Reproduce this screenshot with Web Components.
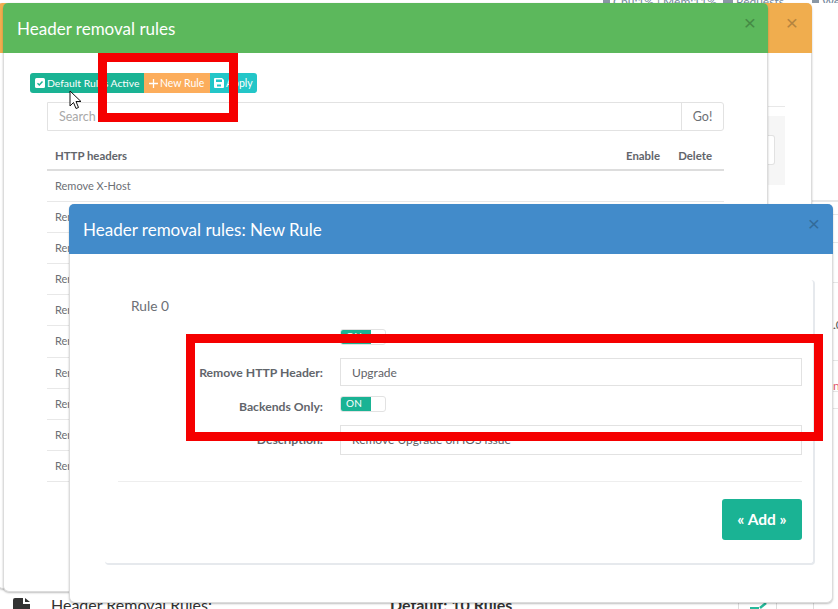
<!DOCTYPE html>
<html><head><meta charset="utf-8"><style>
html,body{margin:0;padding:0;background:#fff;overflow:hidden;height:609px;font-family:Lato,"Liberation Sans",sans-serif;color:#6c6f75}
</style></head><body>
<x-stage>
  <x-backdrop></x-backdrop>
  <x-modal slot="modals" tone="#f0ad4e" style="left:-3px;top:3px;width:815px;height:586px;--pr:14px" title-text="" close="#b5843f"><x-behind></x-behind></x-modal>
  <x-modal slot="modals" tone="#5cb85c" style="left:3px;top:3px;width:765px;height:589px;--pr:12px" title-text="Header removal rules" close="#458a45">
    <div style="padding:20px 43px 0 26px">
      <x-toolbar></x-toolbar>
      <x-rules></x-rules>
    </div>
  </x-modal>
  <x-modal slot="modals" tone="#428bca" style="left:69px;top:204px;width:764px;height:399px;--pr:13px" title-text="Header removal rules: New Rule" close="#336b9a">
    <x-rule-form></x-rule-form>
  </x-modal>
  <x-mark slot="modals" style="left:98px;top:53px;width:140px;height:69px"></x-mark>
  <x-mark slot="modals" style="left:186px;top:334px;width:637px;height:107px"></x-mark>
  <x-cursor slot="modals" style="left:69px;top:90px"></x-cursor>
</x-stage>
<script>
function def(name, css, html){
  customElements.define(name, class extends HTMLElement{
    connectedCallback(){
      if(this.shadowRoot) return;
      const r=this.attachShadow({mode:'open'});
      r.innerHTML='<style>'+css+'</style>'+(typeof html==='function'?html(this):html);
    }
  });
}
def('x-stage',':host{display:block;position:relative;width:838px;height:609px;overflow:hidden}','<slot></slot><slot name="modals"></slot>');
def('x-backdrop',`:host{display:flex;flex-direction:column;height:609px;color:#73879c;font-size:12px}
.top{display:grid;grid-template-columns:600px 13px 107px 16px 73px 13px 16px;height:3px;overflow:hidden;line-height:3px;flex:none;white-space:nowrap}
.top i{display:block;height:3px;background:#8a97a5;margin:0 3px}
.mid{flex:1;display:flex;flex-direction:column;align-items:flex-end}
.long{width:27px;height:2px;background:#e8e8e8;margin-top:197px;flex:none}
.strip{width:5px;font-size:12px;overflow:hidden;white-space:nowrap;line-height:14px}
.strip div{border-bottom:1px solid #e6e6e6;box-sizing:border-box}
.bottom{display:grid;grid-template-columns:51px 339px 348px 38px 37px 25px;height:11px;flex:none;overflow:hidden;color:#333;font-size:16px;line-height:20px}
.bottom>div{height:11px}
.doc{padding-left:13px}
.v{border-left:1px solid #ddd}
b{font-weight:700}
.t{margin-top:-3px}
.edit{padding-left:11px}`,
`<div class="top"><span></span><i></i><span>Cpu:1% | Mem:11%</span><i></i><span>Requests</span><i></i><span>We</span></div>
<div class="mid"><div class="long"></div><div class="strip">
<div style="height:13px"></div><div style="height:28px"></div><div style="height:40px"></div><div style="height:46px;padding-top:35px;color:#555">.0</div><div style="height:32px"></div><div style="height:31px;padding-top:18px;color:#e2566f">na</div><div style="height:17px"></div>
</div></div>
<div class="bottom"><div class="doc"><svg width="17" height="11" viewBox="0 0 17 11" style="display:block"><path d="M0 2q0-2 2-2h8v6h7v5H0z" fill="#333"/><path d="M12 0l5 4h-5z" fill="#333"/></svg></div><div class="t">Header Removal Rules:</div><div class="t"><b>Default: 10 Rules</b></div><div class="v edit"><svg width="20" height="11" viewBox="0 0 20 11" style="display:block"><path d="M0 10h9" stroke="#26b99a" stroke-width="2" fill="none"/><path d="M10 10l6-5" stroke="#26b99a" stroke-width="2.500" fill="none"/></svg></div><div class="v"></div><div class="v"></div></div>`);
def('x-behind',`:host{display:block;padding-left:770px;box-sizing:border-box}
.rule{width:17px;height:1px;background:#e8e8e8;margin-top:53px;margin-bottom:9px}
.well{width:17px;height:69px;background:#f6f6f6;padding-top:19px;box-sizing:border-box}
.in{width:7px;height:30px;background:#fff;border:1px solid #e2e2e2;border-left:0;border-radius:0 3px 3px 0;box-sizing:border-box}`,
'<div class="rule"></div><div class="well"><div class="in"></div></div>');
def('x-modal',`:host{display:flex;flex-direction:column;position:absolute;background:#fff;border:1px solid #dcdcdc;border-top:0;border-radius:6px;box-sizing:border-box;box-shadow:0 1px 2px rgba(0,0,0,.25)}
header{display:flex;align-items:center;justify-content:space-between;height:50px;flex:none;margin:0 -1px;padding:0 var(--pr,13px) 0 14px;box-sizing:border-box;color:#fff;border-radius:5px 5px 0 0}
h4{margin:2px 0 0;font-weight:400;font-size:17px;line-height:20px}
.x{font-size:21px;line-height:1;font-family:"Liberation Sans",sans-serif;margin-top:-11px}`,
h=>`<header style="background:${h.getAttribute('tone')}"><h4>${h.getAttribute('title-text')||''}</h4><span class="x" style="color:${h.getAttribute('close')}">×</span></header><slot></slot>`);
def('x-mark',':host{display:block;position:absolute;box-sizing:border-box;border:9px solid #f50000}','');
def('x-cursor',':host{display:block;position:absolute;width:13px;height:20px}','<svg width="13" height="20" viewBox="0 0 13 20"><path d="M1 1v15l3.500-3.500 2.500 6 2.500-1-2.500-6h5z" fill="#fff" stroke="#111" stroke-width="1"/></svg>');
def('x-toolbar',`:host{display:flex;height:20px;font-size:10.5px;color:#fff;line-height:20px;width:max-content}
span{display:flex;align-items:center;gap:2px;box-sizing:border-box;height:20px;white-space:nowrap}
.a{background:#1ab394;width:114px;padding-left:5px;font-size:10.4px;border-radius:3px 0 0 3px}
.b{background:#fcad5c;width:66px;padding-left:5px}
.c{background:#23c6c8;width:47px;padding-left:4px;border-radius:0 3px 3px 0}`,
`<span class="a"><svg width="10" height="10" viewBox="0 0 10 10"><rect width="10" height="10" rx="1.500" fill="#fff"/><path d="M2.500 5.200l1.800 1.800L7.500 3.500" stroke="#1ab394" stroke-width="1.400" fill="none"/></svg>Default Rules Active</span><span class="b"><svg width="9" height="9" viewBox="0 0 9 9"><path d="M4.500 0v9M0 4.500h9" stroke="#fff" stroke-width="1.300"/></svg>New Rule</span><span class="c"><svg width="10" height="10" viewBox="0 0 10 10"><path d="M1 0h7l2 2v7a1 1 0 0 1-1 1H1a1 1 0 0 1-1-1V1a1 1 0 0 1 1-1z" fill="#fff"/><rect x="2" y="1.500" width="6" height="2.500" fill="#23c6c8"/><rect x="3" y="6.500" width="4" height="2" fill="#23c6c8"/></svg>Apply</span>`);
def('x-rules',`:host{display:block;margin:9px 0 0 17px;font-size:11px}
.search{display:flex;height:27px;border:1px solid #e2e2e2;border-radius:0 3px 3px 0;font-size:12.5px}
.in{flex:1;padding-left:11px;line-height:27px;color:#a9a9a9}
.go{width:41px;border-left:1px solid #e2e2e2;text-align:center;line-height:27px}
.row{display:grid;grid-template-columns:1fr 52px 52px;border-bottom:1px solid #e8e8e8;height:30.1px;line-height:30px;padding:0 12px 0 8px}
.h{font-size:11.4px;font-weight:700;height:40px;line-height:50px;border-bottom:2px solid #ddd;box-sizing:border-box;color:#62656b}
.h span+span{text-align:right}`,
()=>{let r='';for(let i=0;i<10;i++)r+=`<div class="row"><span>${i==0?'Remove X-Host':'Remove'}</span></div>`;
return `<div class="search"><div class="in">Search</div><div class="go">Go!</div></div><div class="row h"><span>HTTP headers</span><span>Enable</span><span>Delete</span></div>${r}`});
def('x-switch',`:host{display:block;width:46px;height:16px;border:1px solid #e2e2e2;border-radius:3px;box-sizing:border-box;overflow:hidden;background:#fff}
.on{display:block;width:31px;height:16px;margin:-1px 0 0 -1px;background:#1ab394;color:#fff;font-size:10px;line-height:14px;padding-left:6px;box-sizing:border-box;letter-spacing:.3px}`,
'<span class="on">ON</span>');
def('x-rule-form',`:host{display:block;margin:26px 17px 0 35px;height:285px;border:solid #e6e9ed;border-width:0 2px 2px 0;border-radius:4px;box-sizing:border-box;padding:16px 11px 0 13px;font-size:12px}
h5{margin:0;font-size:13.7px;font-weight:400;line-height:20px;padding-left:13px;height:37px}
.f{display:grid;grid-template-columns:205px 1fr;column-gap:17px;align-items:center}
label{text-align:right;font-weight:700;white-space:nowrap;line-height:16px;font-size:12.2px;color:#62656b}
.in{height:28px;border:1px solid #e2e2e2;box-sizing:border-box;padding-left:11px;line-height:27px;overflow:hidden;color:#5f6267}
hr{border:0;border-top:1px solid #eee;margin:26px 0 17px}
.add{display:block;margin-left:auto;width:80px;height:41px;border-radius:3px;background:#1ab394;color:#fff;text-align:center;line-height:41px;font-size:15.5px;font-weight:700;border:0;padding:0;font-family:inherit}`,
`<h5>Rule 0</h5>
<div class="f" style="height:16px;margin-top:-4px;margin-bottom:13px"><span></span><x-switch></x-switch></div>
<div class="f" style="margin-bottom:10px"><label style="padding-top:1px">Remove HTTP Header:</label><div class="in">Upgrade</div></div>
<div class="f" style="margin-bottom:13px"><label style="position:relative;top:3px">Backends Only:</label><x-switch></x-switch></div>
<div class="f"><label>Description:</label><div class="in" style="height:30px">Remove Upgrade on IOS issue</div></div>
<hr><button class="add">« Add »</button>`);
</script></body></html>
